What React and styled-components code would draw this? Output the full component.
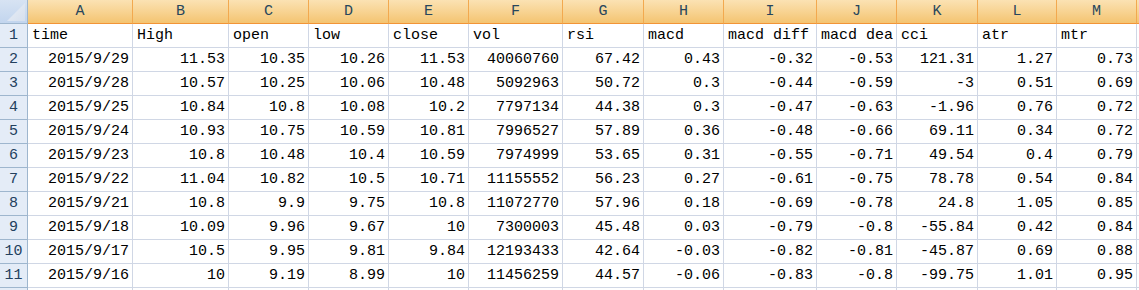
import React from "react";
import styled, { createGlobalStyle } from "styled-components";

const GlobalStyle = createGlobalStyle`
  html, body {
    margin: 0;
    padding: 0;
    background: #ffffff;
    overflow: hidden;
  }
  body {
    font-family: "Liberation Mono", "DejaVu Sans Mono", monospace;
  }
`;

const COLS = [
  { key: "A", width: 105 },
  { key: "B", width: 96 },
  { key: "C", width: 80 },
  { key: "D", width: 80 },
  { key: "E", width: 80 },
  { key: "F", width: 94 },
  { key: "G", width: 81 },
  { key: "H", width: 80 },
  { key: "I", width: 93 },
  { key: "J", width: 80 },
  { key: "K", width: 81 },
  { key: "L", width: 79 },
  { key: "M", width: 80 },
  { key: "", width: 80 },
];

const HEADERS = ["time", "High", "open", "low", "close", "vol", "rsi", "macd", "macd diff", "macd dea", "cci", "atr", "mtr", ""];

const DATA = [
  ["2015/9/29", "11.53", "10.35", "10.26", "11.53", "40060760", "67.42", "0.43", "-0.32", "-0.53", "121.31", "1.27", "0.73"],
  ["2015/9/28", "10.57", "10.25", "10.06", "10.48", "5092963", "50.72", "0.3", "-0.44", "-0.59", "-3", "0.51", "0.69"],
  ["2015/9/25", "10.84", "10.8", "10.08", "10.2", "7797134", "44.38", "0.3", "-0.47", "-0.63", "-1.96", "0.76", "0.72"],
  ["2015/9/24", "10.93", "10.75", "10.59", "10.81", "7996527", "57.89", "0.36", "-0.48", "-0.66", "69.11", "0.34", "0.72"],
  ["2015/9/23", "10.8", "10.48", "10.4", "10.59", "7974999", "53.65", "0.31", "-0.55", "-0.71", "49.54", "0.4", "0.79"],
  ["2015/9/22", "11.04", "10.82", "10.5", "10.71", "11155552", "56.23", "0.27", "-0.61", "-0.75", "78.78", "0.54", "0.84"],
  ["2015/9/21", "10.8", "9.9", "9.75", "10.8", "11072770", "57.96", "0.18", "-0.69", "-0.78", "24.8", "1.05", "0.85"],
  ["2015/9/18", "10.09", "9.96", "9.67", "10", "7300003", "45.48", "0.03", "-0.79", "-0.8", "-55.84", "0.42", "0.84"],
  ["2015/9/17", "10.5", "9.95", "9.81", "9.84", "12193433", "42.64", "-0.03", "-0.82", "-0.81", "-45.87", "0.69", "0.88"],
  ["2015/9/16", "10", "9.19", "8.99", "10", "11456259", "44.57", "-0.06", "-0.83", "-0.8", "-99.75", "1.01", "0.95"],
];

const Sheet = styled.div`
  display: grid;
  grid-template-columns: 28px ${COLS.map((c) => `${c.width}px`).join(" ")};
  grid-auto-rows: 24px;
  width: max-content;
  font-family: "Liberation Mono", "DejaVu Sans Mono", monospace;
  font-size: 15px;
  line-height: 23px;
  color: #000;
`;

const Corner = styled.div`
  position: relative;
  box-sizing: border-box;
  border-right: 1px solid #9eb6ce;
  border-bottom: 1px solid #9eb6ce;
  background: linear-gradient(180deg, #d7e3f3 0%, #c2d5ee 100%);
  overflow: hidden;
`;

const CornerTriangle = styled.svg`
  position: absolute;
  right: 2px;
  bottom: 2px;
  width: 18px;
  height: 18px;
`;

const ColHeader = styled.div`
  box-sizing: border-box;
  text-align: center;
  color: #27465c;
  background: linear-gradient(180deg, #fbe2b3 0%, #f8d596 45%, #f4c471 100%);
  border-right: 1px solid #f2a94f;
  border-bottom: 1px solid #f29436;
  white-space: nowrap;
  overflow: hidden;
`;

const RowHeader = styled.div`
  box-sizing: border-box;
  text-align: center;
  color: #23405e;
  background: #e4ecf7;
  border-right: 1px solid #9eb6ce;
  border-bottom: 1px solid #9eb6ce;
  white-space: nowrap;
  overflow: hidden;
`;

const Cell = styled.div`
  box-sizing: border-box;
  padding: 0 ${(p) => (p.$align === "right" ? "3px" : "0")} 0 ${(p) => (p.$align === "left" ? "4px" : "0")};
  text-align: ${(p) => p.$align};
  background: #ffffff;
  border-right: 1px solid #d0d7e5;
  border-bottom: 1px solid #d0d7e5;
  white-space: nowrap;
  overflow: visible;
`;

export default function App() {
  const rows = [HEADERS, ...DATA, []];
  return (
    <>
      <GlobalStyle />
      <Sheet>
        <Corner>
          <CornerTriangle viewBox="0 0 18 18">
            <defs>
              <linearGradient id="tri" x1="0" y1="0" x2="1" y2="1">
                <stop offset="0" stopColor="#e9eef6" />
                <stop offset="1" stopColor="#d6e0ee" />
              </linearGradient>
            </defs>
            <polygon points="18,0 18,18 0,18" fill="url(#tri)" />
          </CornerTriangle>
        </Corner>
        {COLS.map((c, i) => (
          <ColHeader key={i}>{c.key}</ColHeader>
        ))}
        {rows.map((row, ri) => (
          <React.Fragment key={ri}>
            <RowHeader>{ri < rows.length - 1 ? ri + 1 : ""}</RowHeader>
            {COLS.map((c, ci) => {
              const v = row[ci] ?? "";
              const align = ri === 0 ? "left" : "right";
              return (
                <Cell key={ci} $align={align}>
                  {v}
                </Cell>
              );
            })}
          </React.Fragment>
        ))}
      </Sheet>
    </>
  );
}
